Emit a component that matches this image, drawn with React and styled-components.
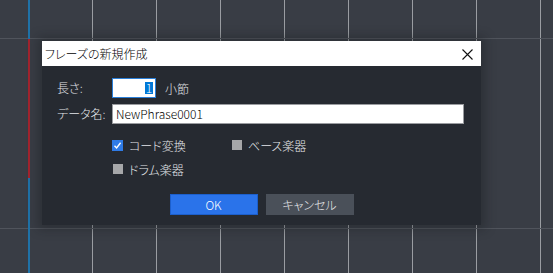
import React from "react";
import styled, { createGlobalStyle } from "styled-components";

const GlobalStyle = createGlobalStyle`
  html, body { margin: 0; padding: 0; background: #393d45; overflow: hidden; }
  * { box-sizing: border-box; }
`;

const FONT = `"Noto Sans CJK JP", "Noto Sans", sans-serif`;

const Canvas = styled.div`
  position: relative;
  width: 553px;
  height: 273px;
  background-color: #393d45;
  background-image:
    linear-gradient(to bottom, transparent 38px, #50545c 38px, #50545c 39px, transparent 39px),
    linear-gradient(to bottom, transparent 228px, #50545c 228px, #50545c 229px, transparent 229px),
    linear-gradient(to right, #9a9da2 1px, transparent 1px);
  background-size: 100% 100%, 100% 100%, 64px 100%;
  background-position: 0 0, 0 0, 28px 0;
  background-repeat: no-repeat, no-repeat, repeat-x;
  font-family: ${FONT};
  font-weight: 300;
  font-feature-settings: "palt";
`;

const Marker = styled.div`
  position: absolute;
  left: 28px;
  top: 0;
  width: 2px;
  height: 273px;
  background: linear-gradient(
    to bottom,
    #1f72a8 0, #1f72a8 39px,
    #a3242e 39px, #a3242e 178px,
    #1f72a8 178px
  );
`;

const Dialog = styled.div`
  position: absolute;
  left: 42px;
  top: 41px;
  width: 439px;
  display: flex;
  flex-direction: column;
  box-shadow: 0 0 10px 4px rgba(20, 22, 26, 0.35);
`;

const TitleBar = styled.div`
  height: 25px;
  background: #ffffff;
  display: flex;
  align-items: center;
  justify-content: space-between;
  padding: 0 8px 0 3px;
  color: #000;
  font-size: 12px;
`;

const CloseButton = styled.div`
  width: 12px;
  height: 12px;
  display: flex;
  align-items: center;
  justify-content: center;
  margin-top: 2px;
`;

const Body = styled.div`
  background: #262a31;
  height: 159px;
  padding: 12px 17px 10px 15px;
  display: flex;
  flex-direction: column;
`;

const FormGrid = styled.div`
  display: grid;
  grid-template-columns: 55px 1fr;
  row-gap: 6px;
  align-items: center;
`;

const Label = styled.div`
  color: #e4e6ea;
  font-size: 12px;
  line-height: 20px;
`;

const InlineRow = styled.div`
  display: flex;
  align-items: center;
  gap: 9px;
`;

const NumberBox = styled.div`
  width: 44px;
  height: 20px;
  background: #fff;
  border: 1px solid #2a7fd9;
  display: flex;
  align-items: center;
  justify-content: flex-end;
  padding-right: 2px;
`;

const Selected = styled.span`
  background: #0078d7;
  color: #fff;
  font-size: 12px;
  line-height: 12px;
  height: 12px;
  width: 8px;
  display: flex;
  align-items: center;
  justify-content: center;
`;

const Unit = styled.span`
  color: #e4e6ea;
  font-size: 12px;
`;

const TextBox = styled.div`
  height: 20px;
  background: #fff;
  border: 1px solid #9a9ca0;
  color: #000;
  font-size: 12px;
  line-height: 18px;
  padding-left: 3px;
`;

const Options = styled.div`
  margin-top: 12px;
  margin-left: 55px;
  display: grid;
  grid-template-columns: 119px 1fr;
  grid-auto-rows: 18px;
  row-gap: 6px;
`;

const Option = styled.div`
  display: flex;
  align-items: center;
  gap: 6px;
  color: #e4e6ea;
  font-size: 12px;
`;

const Box = styled.div`
  width: 11px;
  height: 11px;
  display: flex;
  align-items: center;
  justify-content: center;
  flex: none;
  &::before {
    content: "";
    display: ${(p) => (p.$checked ? "none" : "block")};
    width: 10px;
    height: 10px;
    background: #a6a7a9;
  }
  background: ${(p) => (p.$checked ? "#2f7be6" : "transparent")};
`;

const Buttons = styled.div`
  margin-top: auto;
  display: flex;
  justify-content: center;
  gap: 8px;
  padding-left: 2px;
`;

const Button = styled.div`
  width: 88px;
  height: 21px;
  display: flex;
  align-items: center;
  justify-content: center;
  font-size: 12px;
  color: ${(p) => (p.$primary ? "#ffffff" : "#e8e9eb")};
  background: ${(p) => (p.$primary ? "#2a73ea" : "#4a5059")};
  border: 1px solid ${(p) => (p.$primary ? "#1c5fcc" : "#4a5059")};
`;

const Check = () => (
  <svg width="9" height="9" viewBox="0 0 9 9">
    <path d="M1.5 4.8 L3.6 7 L7.6 1.8" fill="none" stroke="#fff" strokeWidth="1.4" />
  </svg>
);

const Cross = () => (
  <svg width="11" height="11" viewBox="0 0 11 11">
    <path d="M0.5 0.5 L10.5 10.5 M10.5 0.5 L0.5 10.5" stroke="#111" strokeWidth="1.1" />
  </svg>
);

function Checkbox({ checked, label }) {
  return (
    <Option>
      <Box $checked={checked}>{checked && <Check />}</Box>
      <span>{label}</span>
    </Option>
  );
}

export default function App() {
  return (
    <>
      <GlobalStyle />
      <Canvas>
        <Marker />
        <Dialog>
          <TitleBar>
            <span>フレーズの新規作成</span>
            <CloseButton>
              <Cross />
            </CloseButton>
          </TitleBar>
          <Body>
            <FormGrid>
              <Label>長さ:</Label>
              <InlineRow>
                <NumberBox>
                  <Selected>1</Selected>
                </NumberBox>
                <Unit>小節</Unit>
              </InlineRow>
              <Label>データ名:</Label>
              <TextBox>NewPhrase0001</TextBox>
            </FormGrid>
            <Options>
              <Checkbox checked label="コード変換" />
              <Checkbox label="ベース楽器" />
              <Checkbox label="ドラム楽器" />
            </Options>
            <Buttons>
              <Button $primary>OK</Button>
              <Button>キャンセル</Button>
            </Buttons>
          </Body>
        </Dialog>
      </Canvas>
    </>
  );
}
